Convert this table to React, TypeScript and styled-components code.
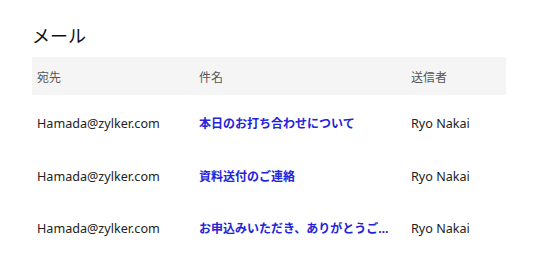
import React from 'react';
import styled, { createGlobalStyle } from 'styled-components';

const GlobalStyle = createGlobalStyle`
  body {
    margin: 0;
    background: #ffffff;
    font-family: "Noto Sans", "Noto Sans CJK JP", sans-serif;
  }
`;

const Page = styled.div`
  padding: 23px 28px 0 32px;
`;

const Title = styled.h2`
  margin: 0 0 9px;
  font-size: 18px;
  font-weight: 400;
  line-height: 25px;
  color: #111111;
  font-family: "Noto Sans CJK JP", "Noto Sans", sans-serif;
`;

const Table = styled.table`
  width: 474px;
  border-collapse: collapse;
  table-layout: fixed;
`;

const HeadRow = styled.tr`
  background: #f5f5f5;
  height: 38px;
`;

const HeadCell = styled.th<{ $width: number }>`
  width: ${p => p.$width - 10}px;
  padding: 0 5px;
  text-align: left;
  font-size: 12px;
  font-weight: 400;
  color: #555555;
  font-family: "Noto Sans CJK JP", "Noto Sans", sans-serif;
`;

const Cell = styled.td`
  padding: 19px 5px 13.5px;
  font-size: 12.6px;
  line-height: 20px;
  color: #222222;
  white-space: nowrap;
  overflow: hidden;
  text-overflow: ellipsis;
`;

const SubjectCell = styled(Cell)`
  padding-right: 12px;
  font-size: 12px;
  font-weight: 700;
  color: #2323d9;
  font-family: "Noto Sans", "Noto Sans CJK JP", sans-serif;
`;

const mails = [
  { to: 'Hamada@zylker.com', subject: '本日のお打ち合わせについて', from: 'Ryo Nakai' },
  { to: 'Hamada@zylker.com', subject: '資料送付のご連絡', from: 'Ryo Nakai' },
  { to: 'Hamada@zylker.com', subject: 'お申込みいただき、ありがとうございます', from: 'Ryo Nakai' },
];

const App: React.FC = () => (
  <>
    <GlobalStyle />
    <Page>
      <Title>メール</Title>
      <Table>
        <thead>
          <HeadRow>
            <HeadCell $width={162}>宛先</HeadCell>
            <HeadCell $width={212}>件名</HeadCell>
            <HeadCell $width={100}>送信者</HeadCell>
          </HeadRow>
        </thead>
        <tbody>
          {mails.map((m, i) => (
            <tr key={i}>
              <Cell>{m.to}</Cell>
              <SubjectCell>{m.subject}</SubjectCell>
              <Cell>{m.from}</Cell>
            </tr>
          ))}
        </tbody>
      </Table>
    </Page>
  </>
);

export default App;
